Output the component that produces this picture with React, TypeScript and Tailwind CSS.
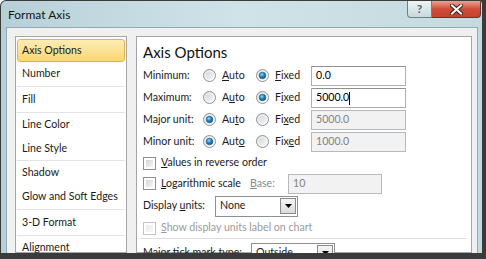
import React from "react";

const font = "font-['Lato','Noto_Sans',sans-serif]";

function Radio({ checked }: { checked?: boolean }) {
  return (
    <svg width="13" height="13" viewBox="0 0 13 13" className="shrink-0">
      <defs>
        <linearGradient id="radio-bg" x1="0" y1="0" x2="1" y2="1">
          <stop offset="0" stopColor="#cfd1d3" />
          <stop offset="1" stopColor="#fbfbfb" />
        </linearGradient>
        <radialGradient id="radio-dot" cx="0.4" cy="0.35" r="0.7">
          <stop offset="0" stopColor="#9fdcfb" />
          <stop offset="0.45" stopColor="#2a8ccb" />
          <stop offset="1" stopColor="#0c4a78" />
        </radialGradient>
      </defs>
      <circle cx="6.5" cy="6.5" r="6" fill="url(#radio-bg)" stroke="#8f9396" />
      <circle cx="6.5" cy="6.5" r="4.6" fill="none" stroke="#ffffff" strokeOpacity="0.7" />
      {checked && <circle cx="6.5" cy="6.5" r="3.3" fill="url(#radio-dot)" stroke="#1b5b86" strokeWidth="0.6" />}
    </svg>
  );
}

function Check({ disabled }: { disabled?: boolean }) {
  return (
    <div
      className={`w-[13px] h-[13px] shrink-0 border bg-white p-[2px] ${
        disabled ? "border-[#c4c4c4]" : "border-[#8e8f8f]"
      }`}
    >
      <div
        className={`w-full h-full bg-gradient-to-br ${
          disabled ? "from-[#ececec] to-[#f8f8f8]" : "from-[#d3d5d7] to-[#f6f6f6]"
        }`}
      />
    </div>
  );
}

function TextBox({ value, disabled, caret, w = "w-[95px]" }: { value: string; disabled?: boolean; caret?: boolean; w?: string }) {
  return (
    <div
      className={`${w} h-[20px] border flex items-center px-[4px] text-[10.6px] ${
        disabled
          ? "bg-[#f2f2f2] border-[#b6babd] text-[#838383]"
          : "bg-white border-[#abadb3] border-t-[#8d9197] text-black"
      }`}
    >
      {value}
      {caret && <span className="inline-block w-[1px] h-[13px] bg-black" />}
    </div>
  );
}

function Dropdown({ value, w }: { value: string; w: string }) {
  return (
    <div className={`${w} h-[21px] border border-[#8c8f94] bg-white flex items-center justify-between pl-[4px] pr-[1px] text-[10.6px]`}>
      <span>{value}</span>
      <div className="w-[16px] h-[16px] border border-[#8a8a8a] bg-gradient-to-b from-[#f6f6f6] to-[#dadada] flex items-center justify-center">
        <svg width="7" height="4" viewBox="0 0 7 4">
          <path d="M0 0H7L3.5 4Z" fill="#000" />
        </svg>
      </div>
    </div>
  );
}

const u = (s: string) => <span className="underline underline-offset-[1px] decoration-[1px]">{s}</span>;

const unitRows = [
  { label: "Minimum:", autoOn: false, auto: <>{u("A")}uto</>, fixed: <>{u("F")}ixed</>, value: "0.0" },
  { label: "Maximum:", autoOn: false, auto: <>A{u("u")}to</>, fixed: <>F{u("i")}xed</>, value: "5000.0", caret: true },
  { label: "Major unit:", autoOn: true, auto: <>Au{u("t")}o</>, fixed: <>Fi{u("x")}ed</>, value: "5000.0" },
  { label: "Minor unit:", autoOn: true, auto: <>Aut{u("o")}</>, fixed: <>Fix{u("e")}d</>, value: "1000.0" },
];

const navItems = [
  { name: "Number", h: "h-[25px]", sep: true },
  { name: "Fill", h: "h-[26px]", sep: true },
  { name: "Line Color", h: "h-[24px]" },
  { name: "Line Style", h: "h-[24px]", sep: true },
  { name: "Shadow", h: "h-[24px]" },
  { name: "Glow and Soft Edges", h: "h-[25px]", sep: true },
  { name: "3-D Format", h: "h-[26px]", sep: true },
  { name: "Alignment", h: "h-[24px]" },
];

export default function App() {
  return (
    <div className={`w-[486px] h-[259px] overflow-hidden bg-[#3b3b3b] pl-[1px] pt-[1px] pr-[4px] pb-[6px] rounded-tl-[6px] ${font}`}>
      <div className="w-full h-full flex flex-col rounded-tl-[5px] rounded-tr-[3px] bg-gradient-to-r from-[#b7d0d8] via-[#cfe4e9] to-[#c3dade] overflow-hidden">
        {/* title bar */}
        <div className="h-[26px] shrink-0 flex justify-between items-start">
          <div className="pl-[7px] pt-[6px] text-[12px] leading-[16px] text-[#141414]">Format Axis</div>
          <div className="flex mr-[1px]">
            <div className="w-[25px] h-[17px] border border-t-0 border-[#6f7f8a] rounded-bl-[4px] bg-gradient-to-b from-[#eef4f6] to-[#c7d9de] flex items-center justify-center text-[12px] font-bold text-[#55636c] leading-none">
              ?
            </div>
            <div className="w-[49px] h-[17px] border border-t-0 border-l-0 border-[#5c3a33] rounded-br-[4px] bg-gradient-to-b from-[#e9a394] via-[#cf4b36] to-[#c4432f] flex items-center justify-center">
              <svg width="13" height="11" viewBox="0 0 13 11">
                <path d="M2 1.5L11 9.5M11 1.5L2 9.5" stroke="#3a2420" strokeWidth="4" strokeLinecap="square" />
                <path d="M2 1.5L11 9.5M11 1.5L2 9.5" stroke="#ffffff" strokeWidth="2" strokeLinecap="square" />
              </svg>
            </div>
          </div>
        </div>

        {/* client area */}
        <div className="flex-1 min-h-0 ml-[5px] mr-[4px] border border-b-0 border-[#94a9b2] bg-[#f0f0f0] flex pl-[8px] pt-[8px] pr-[5px] gap-[9px] text-[10.6px] text-[#1a1a1a]">
          {/* nav list */}
          <div className="w-[112px] shrink-0 border border-[#a3a6aa] bg-white px-[1px] pt-[1px]">
            <div className="mt-[1px] h-[23px] rounded-[3px] border border-[#e1b54e] bg-gradient-to-b from-[#fdedb4] to-[#f9d66f] flex items-center pl-[4px]">
              Axis Options
            </div>
            {navItems.map((item) => (
              <div
                key={item.name}
                className={`${item.h} flex items-center pl-[5px] ${item.sep ? "border-b border-[#e3e3e3]" : ""}`}
              >
                {item.name}
              </div>
            ))}
          </div>

          {/* options panel */}
          <div className="flex-1 border border-[#a3a6aa] bg-white pl-[6px]">
            <div className="h-[28px] pt-[5px] text-[15px] leading-[20px] text-[#111]">Axis Options</div>

            {unitRows.map((r) => (
              <div key={r.label} className="h-[22px] flex items-center">
                <div className="w-[60px]">{r.label}</div>
                <div className="w-[53px] flex items-center gap-[6px]">
                  <Radio checked={r.autoOn} />
                  <span>{r.auto}</span>
                </div>
                <div className="w-[55px] flex items-center gap-[6px]">
                  <Radio checked={!r.autoOn} />
                  <span>{r.fixed}</span>
                </div>
                <TextBox value={r.value} disabled={r.autoOn} caret={r.caret} />
              </div>
            ))}

            <div className="h-[20px] flex items-center gap-[5px]">
              <Check />
              <span>{u("V")}alues in reverse order</span>
            </div>
            <div className="h-[21px] flex items-center">
              <Check />
              <span className="w-[89px] ml-[5px]">{u("L")}ogarithmic scale</span>
              <span className="w-[38px] text-[#8a8a8a]">{u("B")}ase:</span>
              <TextBox value="10" disabled w="w-[94px]" />
            </div>
            <div className="h-[24px] flex items-center">
              <span className="w-[72px]">Display {u("u")}nits:</span>
              <Dropdown value="None" w="w-[83px]" />
            </div>
            <div className="h-[20px] flex items-center gap-[5px] text-[#9a9a9a]">
              <Check disabled />
              <span>{u("S")}how display units label on chart</span>
            </div>
            <div className="h-[1px] bg-[#dedede] -ml-[3px] mr-[4px]" />
            <div className="h-[26px] flex items-center pt-[2px]">
              <span className="w-[108px]">Ma{u("j")}or tick mark type:</span>
              <Dropdown value="Outside" w="w-[84px]" />
            </div>
          </div>
        </div>
      </div>
    </div>
  );
}
